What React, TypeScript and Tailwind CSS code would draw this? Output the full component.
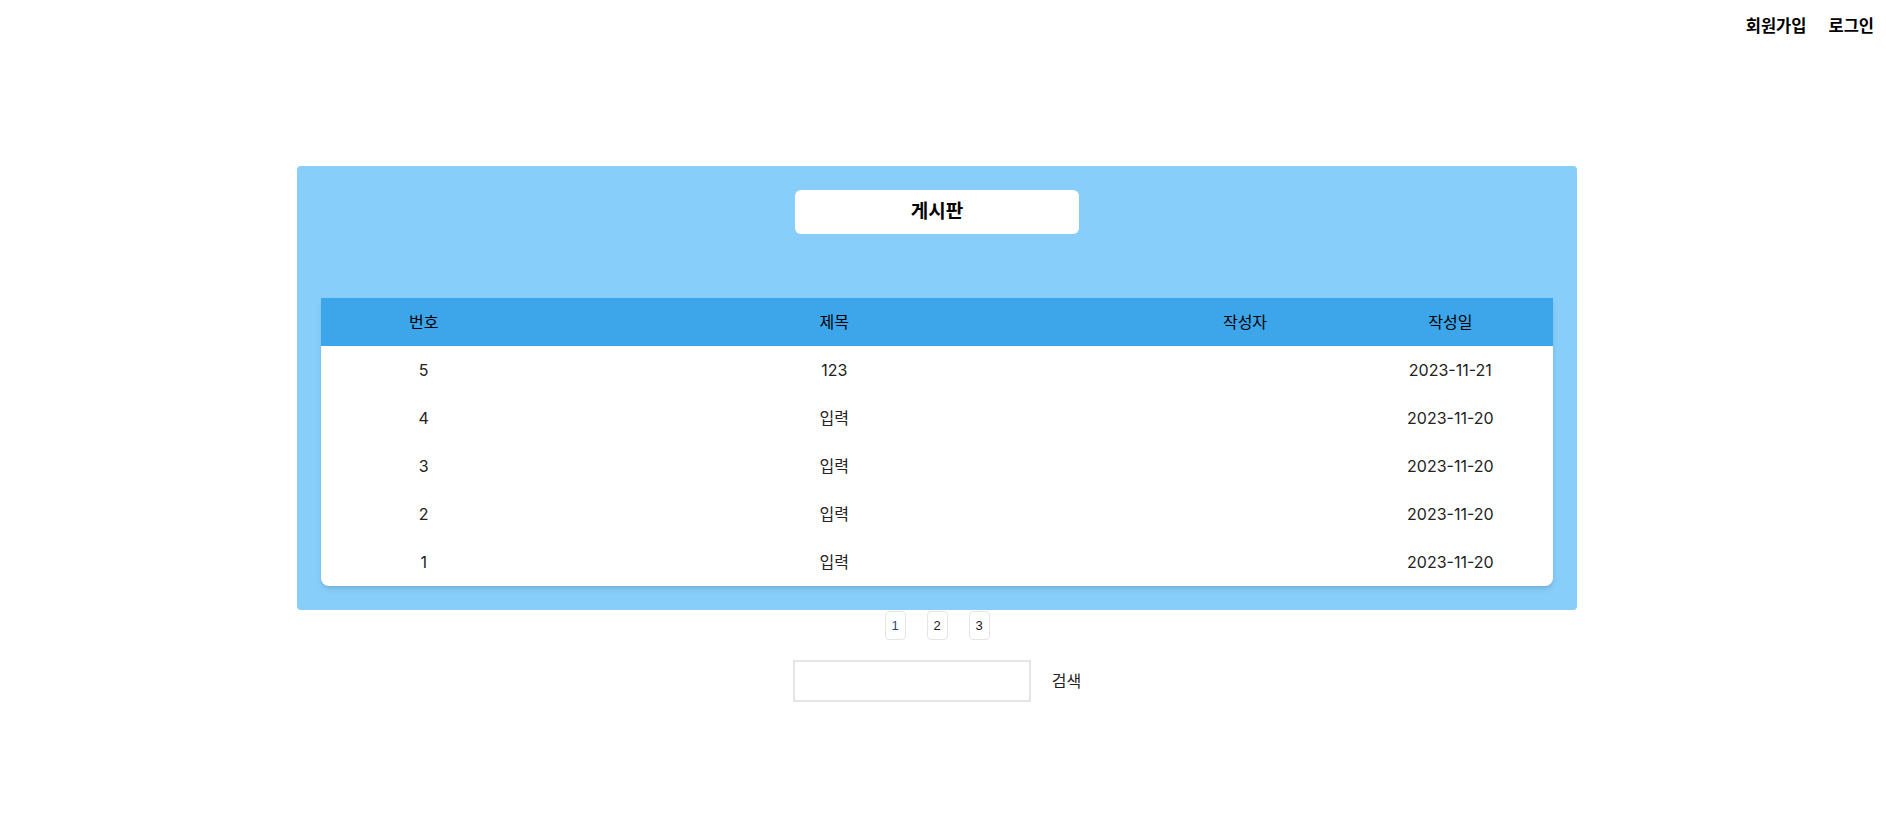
const POSTS = [
  { id: 5, title: '123', author: '', date: '2023-11-21' },
  { id: 4, title: '입력', author: '', date: '2023-11-20' },
  { id: 3, title: '입력', author: '', date: '2023-11-20' },
  { id: 2, title: '입력', author: '', date: '2023-11-20' },
  { id: 1, title: '입력', author: '', date: '2023-11-20' },
];

const FONT = "font-['Inter','Noto_Sans_CJK_KR',sans-serif]";

export default function App() {
  return (
    <div className={`min-h-screen bg-white pr-3 text-[#222] ${FONT}`}>
      {/* Top nav */}
      <header className="h-[52px] flex items-center justify-end gap-[22px] text-[16.5px] font-bold text-black">
        <a href="#">회원가입</a>
        <a href="#">로그인</a>
      </header>

      <main className="flex flex-col items-center pt-[114px]">
        {/* Board */}
        <section className="w-[1280px] bg-[#87cefa] rounded p-6 flex flex-col items-center">
          <div className="w-[284px] h-[44px] bg-white rounded-md flex items-center justify-center">
            <h3 className="text-[19px] font-bold text-black">게시판</h3>
          </div>

          <div className="w-full mt-16 bg-white rounded-b-lg shadow-md">
            <div className="grid grid-cols-[1fr_3fr_1fr_1fr] h-12 items-center text-center bg-[#3da5ea] text-black">
              <span>번호</span>
              <span>제목</span>
              <span>작성자</span>
              <span>작성일</span>
            </div>
            {POSTS.map(p => (
              <div key={p.id} className="grid grid-cols-[1fr_3fr_1fr_1fr] h-12 items-center text-center">
                <span>{p.id}</span>
                <span>{p.title}</span>
                <span>{p.author}</span>
                <span>{p.date}</span>
              </div>
            ))}
          </div>
        </section>

        {/* Pagination */}
        <div className="mt-[1px] flex gap-[21px] font-['Liberation_Sans',sans-serif] text-[13px]">
          {[1, 2, 3].map(n => (
            <button key={n} className={`w-[21px] h-[29px] border border-[#e5e5e5] rounded flex items-center justify-center ${n === 1 ? 'text-[#1f4e79]' : 'text-[#222]'}`}>
              {n}
            </button>
          ))}
        </div>

        {/* Search */}
        <div className="mt-[20px] flex items-center gap-[21px]">
          <input type="text" className="w-[238px] h-[42px] border-2 border-[#e5e5e5] outline-none px-2" />
          <button className="text-base text-[#222]">검색</button>
        </div>
      </main>
    </div>
  );
}
